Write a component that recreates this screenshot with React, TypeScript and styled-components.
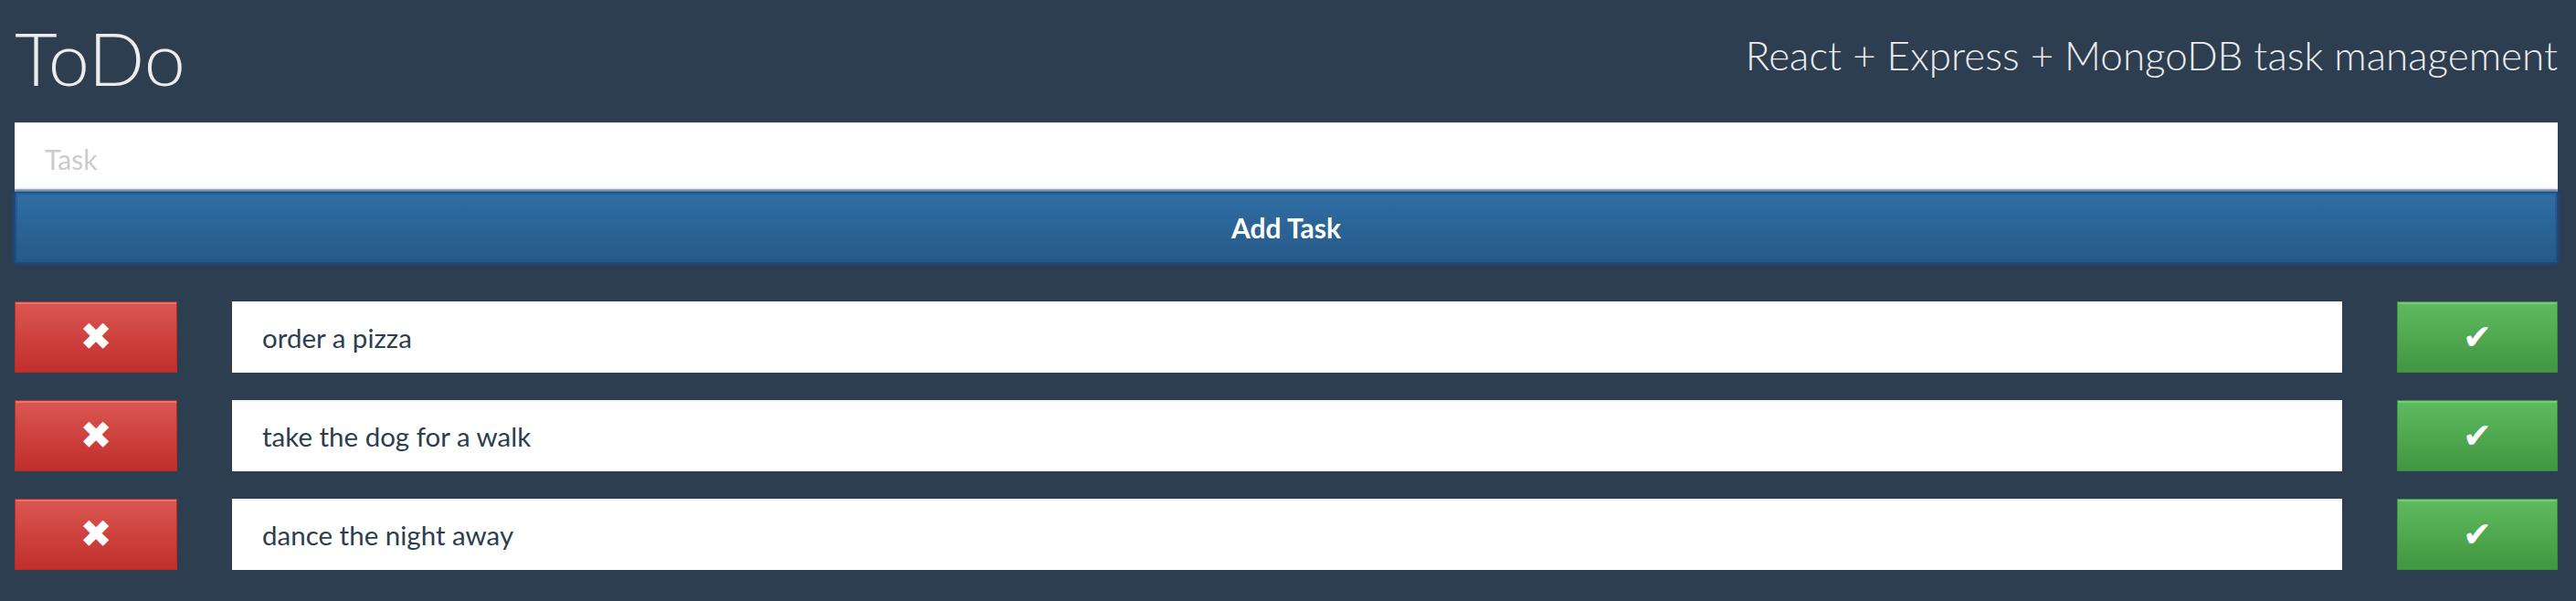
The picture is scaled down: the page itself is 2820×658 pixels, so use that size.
import React, { useState } from 'react';
import styled, { createGlobalStyle } from 'styled-components';

const GlobalStyle = createGlobalStyle`
  body {
    margin: 0;
    padding: 0;
    background-color: #2c3e50;
    font-family: Lato, "Open Sans", Arial, sans-serif;
  }
`;

const Page = styled.div`
  padding: 22px 20px 40px 16px;
  color: #2c3e50;
`;

const Header = styled.header`
  display: flex;
  justify-content: space-between;
  align-items: flex-start;
  margin-bottom: 30px;
`;

const Title = styled.h1`
  margin: 0;
  font-size: 81px;
  line-height: 82px;
  font-weight: 300;
  color: #ececec;
`;

const Subtitle = styled.p`
  margin: 16px 0 0;
  font-size: 44px;
  line-height: 45px;
  font-weight: 300;
  color: #ececec;
`;

const Form = styled.form`
  display: flex;
  flex-direction: column;
`;

const TaskInput = styled.input`
  box-sizing: border-box;
  height: 76px;
  padding: 6px 33px 0;
  border: none;
  border-top: 1px solid #e6e6e9;
  border-bottom: 3px solid #bcc8d6;
  background: #fff;
  font-family: Lato, sans-serif;
  font-size: 30px;
  color: #2c3e50;
  outline: none;

  &::placeholder {
    color: #cccccc;
  }
`;

const AddButton = styled.button`
  height: 78px;
  border: 1px solid #1b4b7c;
  box-shadow: 0 0 4px 1px #1a4f86, inset 0 0 0 2px rgba(30, 80, 135, 0.5);
  background: linear-gradient(to bottom, #2f6ea5 0%, #265a88 100%);
  color: #fff;
  font-family: Lato, sans-serif;
  font-size: 30px;
  font-weight: 700;
  cursor: pointer;
`;

const TaskList = styled.ul`
  list-style: none;
  margin: 42px 0 0;
  padding: 0;
  display: flex;
  flex-direction: column;
  gap: 30px;
`;

const TaskRow = styled.li`
  display: grid;
  grid-template-columns: 178px 1fr 176px;
  column-gap: 60px;
  height: 78px;
`;

const ActionButton = styled.button<{ $variant: 'danger' | 'success' }>`
  display: flex;
  align-items: center;
  justify-content: center;
  padding: 0;
  border: 1px solid ${p => (p.$variant === 'danger' ? '#b92c28' : '#3e8f3e')};
  background: ${p =>
    p.$variant === 'danger'
      ? 'linear-gradient(to bottom, #db5753 0%, #c02e2a 100%)'
      : 'linear-gradient(to bottom, #5fbb5f 0%, #419641 100%)'};
  box-shadow: inset 0 2px 0 rgba(255, 255, 255, 0.18);
  color: #fff;
  font-family: "DejaVu Sans", sans-serif;
  font-size: ${p => (p.$variant === 'danger' ? '42px' : '38px')};
  line-height: 1;
  cursor: pointer;
`;

const TaskText = styled.div`
  display: flex;
  align-items: center;
  padding-left: 33px;
  background: #fff;
  box-shadow: inset 0 2px 2px rgba(0, 0, 0, 0.05);
  font-size: 29.5px;
  color: #2c3e50;
`;

interface Task {
  id: number;
  text: string;
}

const initialTasks: Task[] = [
  { id: 1, text: 'order a pizza' },
  { id: 2, text: 'take the dog for a walk' },
  { id: 3, text: 'dance the night away' },
];

const App: React.FC = () => {
  const [tasks, setTasks] = useState<Task[]>(initialTasks);
  const [value, setValue] = useState('');

  const handleSubmit = (e: React.FormEvent) => {
    e.preventDefault();
    if (!value.trim()) return;
    setTasks(prev => [...prev, { id: Date.now(), text: value.trim() }]);
    setValue('');
  };

  const removeTask = (id: number) => {
    setTasks(prev => prev.filter(t => t.id !== id));
  };

  return (
    <>
      <GlobalStyle />
      <Page>
        <Header>
          <Title>ToDo</Title>
          <Subtitle>React + Express + MongoDB task management</Subtitle>
        </Header>

        <Form onSubmit={handleSubmit}>
          <TaskInput
            placeholder="Task"
            value={value}
            onChange={e => setValue(e.target.value)}
          />
          <AddButton type="submit">Add Task</AddButton>
        </Form>

        <TaskList>
          {tasks.map(task => (
            <TaskRow key={task.id}>
              <ActionButton $variant="danger" onClick={() => removeTask(task.id)}>
                ✖
              </ActionButton>
              <TaskText>{task.text}</TaskText>
              <ActionButton $variant="success" onClick={() => removeTask(task.id)}>
                ✔
              </ActionButton>
            </TaskRow>
          ))}
        </TaskList>
      </Page>
    </>
  );
};

export default App;
